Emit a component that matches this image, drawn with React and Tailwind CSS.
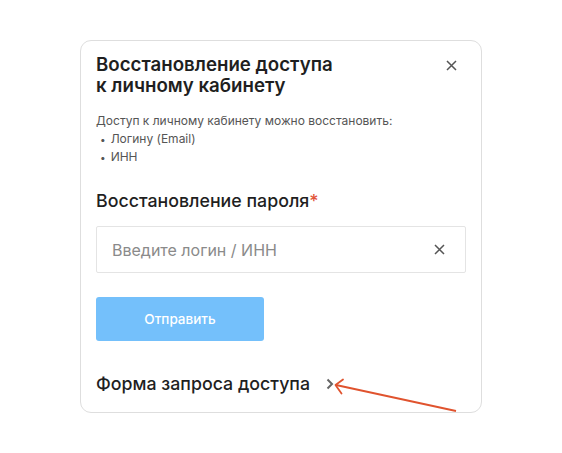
import React from "react";

export default function App() {
  return (
    <div
      className="relative w-[562px] h-[453px] bg-white overflow-hidden"
      style={{ fontFamily: "Inter, 'Noto Sans', sans-serif" }}
    >
      <div className="ml-[80px] mt-[40px] w-[402px] h-[373px] border border-[#dedede] rounded-[11px] bg-white pt-[13px] pl-[15px] pr-[15px] flex flex-col">
        <div className="flex justify-between">
          <h1 className="text-[18.7px] leading-[21px] font-semibold text-[#1f1f1f]">
            Восстановление доступа
            <br />к личному кабинету
          </h1>
          <button className="mr-[9px] mt-[5px] w-[12px] h-[12px] flex items-center justify-center">
            <svg width="11" height="11" viewBox="0 0 11 11" fill="none">
              <path d="M1 1L10 10M10 1L1 10" stroke="#555" strokeWidth="1.5" />
            </svg>
          </button>
        </div>
        <div className="mt-[16px] text-[12px] leading-[18px] text-[#555]">
          <p>Доступ к личному кабинету можно восстановить:</p>
          <div className="flex items-center pl-[4px]">
            <span className="mr-[5px] text-[10px]">•</span>Логину (Email)
          </div>
          <div className="flex items-center pl-[4px]">
            <span className="mr-[5px] text-[10px]">•</span>ИНН
          </div>
        </div>
        <div className="mt-[23px] text-[17.8px] leading-[24px] font-medium text-[#1f1f1f]">
          Восстановление пароля<span className="text-[#e2553a]">*</span>
        </div>
        <div className="mt-[13px] h-[47px] w-[370px] border border-[#e4e4e4] rounded-[2px] flex items-center pl-[15px] pr-[20px] justify-between">
          <span className="text-[16px] text-[#8a8a8a]">Введите логин / ИНН</span>
          <svg width="11" height="11" viewBox="0 0 11 11" fill="none">
            <path d="M1 1L10 10M10 1L1 10" stroke="#555" strokeWidth="1.5" />
          </svg>
        </div>
        <button className="mt-[24px] w-[168px] h-[44px] rounded-[3px] bg-[#74c0fb] text-white text-[13.5px] font-medium flex items-center justify-center">
          Отправить
        </button>
        <div className="mt-[31px] flex items-center text-[17.8px] leading-[24px] text-[#1f1f1f] font-medium">
          <span>Форма запроса доступа</span>
          <svg className="ml-[16px]" width="8" height="12" viewBox="0 0 8 12" fill="none">
            <path d="M1.5 1.5L6 6L1.5 10.5" stroke="#666" strokeWidth="2" />
          </svg>
        </div>
      </div>
      <svg
        className="absolute left-0 top-0 pointer-events-none"
        width="562"
        height="453"
        viewBox="0 0 562 453"
      >
        <path d="M456 411L336 385" stroke="#e0532e" strokeWidth="1.8" fill="none" />
        <path d="M343 379.5L335.5 385L341.5 393.5" stroke="#e0532e" strokeWidth="1.8" fill="none" strokeLinecap="round" strokeLinejoin="round" />
      </svg>
    </div>
  );
}
